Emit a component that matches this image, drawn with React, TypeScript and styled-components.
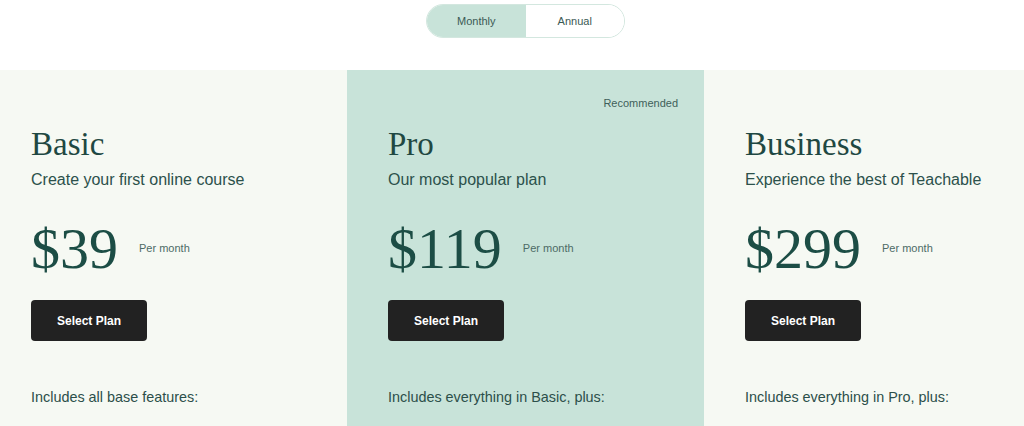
import React from "react";
import styled, { createGlobalStyle } from "styled-components";

const Global = createGlobalStyle`
  html, body { margin: 0; padding: 0; background: #ffffff; overflow: hidden; }
  body { font-family: "Liberation Sans", Arial, sans-serif; }
`;

const Viewport = styled.div`
  width: 1024px;
  height: 426px;
  overflow: hidden;
`;

const Page = styled.div`
  width: 1071px;
  margin-left: -10px;
  display: flex;
  flex-direction: column;
`;

const ToggleBar = styled.div`
  display: flex;
  justify-content: center;
  padding-top: 4px;
  height: 70px;
  box-sizing: border-box;
`;

const Toggle = styled.div`
  display: flex;
  width: 199px;
  height: 34px;
  box-sizing: border-box;
  border: 1px solid #d3e7df;
  border-radius: 17px;
  overflow: hidden;
`;

const ToggleOption = styled.button<{ $active?: boolean }>`
  flex: 1;
  border: none;
  margin: 0;
  padding: 0;
  background: ${(p) => (p.$active ? "#c8e3d9" : "#ffffff")};
  color: #3b5a55;
  font-family: "Liberation Sans", Arial, sans-serif;
  font-size: 11px;
  cursor: pointer;
`;

const Cards = styled.div`
  display: grid;
  grid-template-columns: repeat(3, 357px);
  height: 356px;
`;

const Card = styled.div<{ $featured?: boolean }>`
  background: ${(p) => (p.$featured ? "#c8e3d9" : "#f6f9f3")};
  padding: 26px 26px 0 41px;
  display: flex;
  flex-direction: column;
  align-items: flex-start;
`;

const Recommended = styled.div`
  align-self: flex-end;
  height: 14px;
  line-height: 14px;
  font-size: 11px;
  color: #3f5f5a;
`;

const Title = styled.h2`
  margin: 18px 0 0;
  font-family: "Liberation Serif", "Times New Roman", serif;
  font-weight: 400;
  font-size: 33px;
  line-height: 33px;
  color: #1f4842;
`;

const Subtitle = styled.p`
  margin: 9px 0 0;
  font-size: 16px;
  line-height: 20px;
  color: #2c514b;
`;

const PriceRow = styled.div`
  display: flex;
  align-items: flex-start;
  gap: 21px;
  margin-top: 30px;
`;

const Price = styled.div`
  font-family: "Liberation Serif", "Times New Roman", serif;
  font-size: 58px;
  line-height: 58px;
  color: #1c4d45;
`;

const Period = styled.div`
  margin-top: 21px;
  font-size: 11px;
  line-height: 14px;
  color: #4d6b66;
`;

const SelectButton = styled.button`
  margin-top: 22px;
  width: 116px;
  height: 41px;
  border: none;
  border-radius: 4px;
  background: #222222;
  color: #ffffff;
  font-family: "Liberation Sans", Arial, sans-serif;
  font-weight: 700;
  font-size: 12px;
  cursor: pointer;
`;

const Includes = styled.div`
  margin-top: 46px;
  font-size: 14.4px;
  line-height: 20px;
  color: #2c4f4a;
`;

type Plan = {
  name: string;
  tagline: string;
  price: string;
  includes: string;
  featured?: boolean;
};

const plans: Plan[] = [
  {
    name: "Basic",
    tagline: "Create your first online course",
    price: "$39",
    includes: "Includes all base features:",
  },
  {
    name: "Pro",
    tagline: "Our most popular plan",
    price: "$119",
    includes: "Includes everything in Basic, plus:",
    featured: true,
  },
  {
    name: "Business",
    tagline: "Experience the best of Teachable",
    price: "$299",
    includes: "Includes everything in Pro, plus:",
  },
];

export default function App() {
  return (
    <Viewport>
      <Global />
      <Page>
        <ToggleBar>
          <Toggle>
            <ToggleOption $active>Monthly</ToggleOption>
            <ToggleOption>Annual</ToggleOption>
          </Toggle>
        </ToggleBar>
        <Cards>
          {plans.map((p) => (
            <Card key={p.name} $featured={p.featured}>
              <Recommended>{p.featured ? "Recommended" : ""}</Recommended>
              <Title>{p.name}</Title>
              <Subtitle>{p.tagline}</Subtitle>
              <PriceRow>
                <Price>{p.price}</Price>
                <Period>Per month</Period>
              </PriceRow>
              <SelectButton>Select Plan</SelectButton>
              <Includes>{p.includes}</Includes>
            </Card>
          ))}
        </Cards>
      </Page>
    </Viewport>
  );
}
